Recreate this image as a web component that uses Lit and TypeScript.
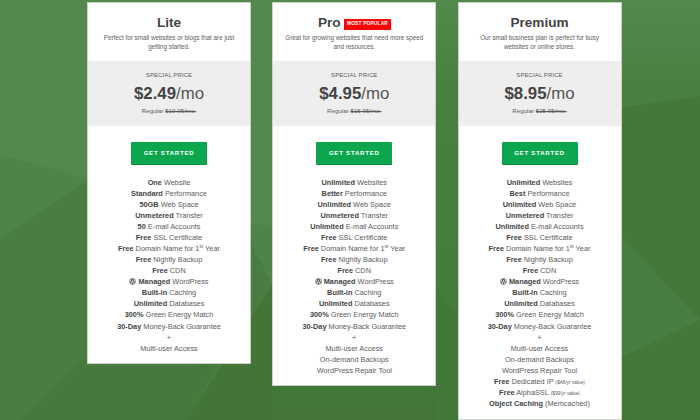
import { LitElement, html, css, svg } from "lit";
import { customElement } from "lit/decorators.js";

const wp = html`<svg class="wp" viewBox="0 0 20 20" aria-hidden="true"><circle cx="10" cy="10" r="9" fill="none" stroke="currentColor" stroke-width="1.6"/><path fill="currentColor" d="M3.2 10c0 2.700 1.600 5 3.900 6.100L3.800 7.200A6.800 6.800 0 0 0 3.200 10zM14.600 9.700c0-.9-.3-1.400-.6-1.900-.3-.5-.6-1-.6-1.500 0-.6.5-1.200 1.100-1.200h.1A6.800 6.800 0 0 0 4.300 6.300h.4c.7 0 1.800-.1 1.800-.1.400 0 .4.500 0 .6 0 0-.4 0-.8.100l2.400 7.300 1.500-4.400-1-2.900c-.4 0-.7-.1-.7-.1-.4 0-.3-.6 0-.6 0 0 1.100.1 1.800.1s1.800-.1 1.800-.1c.4 0 .4.500 0 .6 0 0-.4 0-.8.100l2.400 7.200.7-2.200c.3-1 .6-1.700.6-2.300zM10.100 10.600l-2 5.900a6.800 6.800 0 0 0 4.200-.1l-.1-.1zM16 6.700c0 .2.100.5.100.8 0 .7-.1 1.500-.5 2.400l-2.100 6a6.800 6.800 0 0 0 2.500-9.200z"/></svg>`;

interface Plan {
  name: string;
  badge?: string;
  desc: string;
  price: string;
  regular: string;
  rows: unknown[];
}

const row = (b: string, t: string) => html`<li><b>${b}</b> ${t}</li>`;
const tail = [
  row("Free", "SSL Certificate"),
  html`<li><b>Free</b> Domain Name for 1<sup>st</sup> Year</li>`,
  row("Free", "Nightly Backup"),
  row("Free", "CDN"),
  html`<li>${wp} <b>Managed</b> WordPress</li>`,
  row("Built-in", "Caching"),
  row("Unlimited", "Databases"),
  row("300%", "Green Energy Match"),
  row("30-Day", "Money-Back Guarantee"),
  html`<li>+</li>`,
  html`<li>Multi-user Access</li>`,
];
const proExtra = [html`<li>On-demand Backups</li>`, html`<li>WordPress Repair Tool</li>`];

const plans: Plan[] = [
  {
    name: "Lite",
    desc: "Perfect for small websites or blogs that are just getting started.",
    price: "$2.49",
    regular: "$10.95/mo.",
    rows: [
      row("One", "Website"),
      row("Standard", "Performance"),
      row("50GB", "Web Space"),
      row("Unmetered", "Transfer"),
      row("50", "E-mail Accounts"),
      ...tail,
    ],
  },
  {
    name: "Pro",
    badge: "MOST POPULAR",
    desc: "Great for growing websites that need more speed and resources.",
    price: "$4.95",
    regular: "$15.95/mo.",
    rows: [
      row("Unlimited", "Websites"),
      row("Better", "Performance"),
      row("Unlimited", "Web Space"),
      row("Unmetered", "Transfer"),
      row("Unlimited", "E-mail Accounts"),
      ...tail,
      ...proExtra,
    ],
  },
  {
    name: "Premium",
    desc: "Our small business plan is perfect for busy websites or online stores.",
    price: "$8.95",
    regular: "$25.95/mo.",
    rows: [
      row("Unlimited", "Websites"),
      row("Best", "Performance"),
      row("Unlimited", "Web Space"),
      row("Unmetered", "Transfer"),
      row("Unlimited", "E-mail Accounts"),
      ...tail,
      ...proExtra,
      html`<li><b>Free</b> Dedicated IP <small>($48/yr value)</small></li>`,
      html`<li><b>Free</b> AlphaSSL <small>($99/yr value)</small></li>`,
      html`<li><b>Object Caching</b> (Memcached)</li>`,
    ],
  },
];

@customElement("app-root")
export class AppRoot extends LitElement {
  static styles = css`
    :host {
      display: block;
      width: 700px;
      height: 420px;
      overflow: hidden;
      position: relative;
      background: #47813f;
      font-family: "Liberation Sans", Arial, sans-serif;
      color: #5c5c5c;
    }
    .bg {
      position: absolute;
      inset: 0;
      width: 100%;
      height: 100%;
    }
    .cols {
      position: relative;
      display: grid;
      grid-template-columns: repeat(3, 164px);
      column-gap: 21.25px;
      align-items: start;
      padding: 2px 0 0 87px;
    }
    .card {
      background: #fff;
      border: 1px solid #c9d4c6;
      text-align: center;
    }
    .head {
      box-sizing: border-box;
      height: 58px;
      padding: 10px 12px 0;
    }
    h2 {
      margin: 0;
      font-size: 13.6px;
      line-height: 20px;
      font-weight: 700;
      color: #444;
    }
    .badge {
      display: inline-block;
      vertical-align: 2px;
      padding: 0 2.500px;
      background: #f00;
      color: #fff;
      font-size: 4.800px;
      line-height: 10.500px;
      letter-spacing: 0.2px;
    }
    .desc {
      margin: -0.500px -2px 0;
      font-size: 6.300px;
      line-height: 9.300px;
      color: #5c5c5c;
    }
    .price {
      box-sizing: border-box;
      height: 65px;
      background: #eee;
      padding-top: 9.500px;
      color: #5c5c5c;
    }
    .special {
      font-size: 6px;
      line-height: 9px;
      letter-spacing: 0.1px;
    }
    .amount {
      margin-top: 3px;
      font-size: 16.800px;
      line-height: 21px;
      color: #444;
    }
    .amount b { font-weight: 700; }
    .amount span { font-weight: 400; color: #555; }
    .regular {
      margin-top: 2.500px;
      font-size: 6.200px;
      line-height: 9px;
    }
    .regular s { text-decoration-thickness: 1px; }
    .cta {
      display: block;
      box-sizing: border-box;
      width: 76px;
      height: 23px;
      margin: 16px auto 0;
      border: 0;
      border-bottom: 1px solid #0a8f44;
      border-radius: 1px;
      padding: 0;
      background: #0ca64f;
      color: #fff;
      font: 700 6px/21px "Liberation Sans", Arial, sans-serif;
      letter-spacing: 0.8px;
    }
    ul {
      list-style: none;
      margin: 0;
      padding: 11.500px 0 9.500px;
      font-size: 7.350px;
      line-height: 11.080px;
      color: #5c5c5c;
    }
    li { height: 11.080px; }
    li b { color: #444; font-weight: 700; }
    li small { font-size: 4.800px; line-height: 0; }
    sup { font-size: 5px; line-height: 0; vertical-align: 3px; }
    .wp {
      width: 7px;
      height: 7px;
      vertical-align: -1px;
      color: #444;
    }
  `;

  render() {
    return html`
      <svg class="bg" viewBox="0 0 700 420" preserveAspectRatio="none" aria-hidden="true">
        ${svg`<defs>
          <linearGradient id="fade" gradientUnits="userSpaceOnUse" x1="0" y1="0" x2="0" y2="420">
            <stop offset="0" stop-color="#528a4d"/>
            <stop offset="0.22" stop-color="#48803f"/>
            <stop offset="0.7" stop-color="#457c3c"/>
            <stop offset="1" stop-color="#427536"/>
          </linearGradient>
        </defs>
        <rect width="700" height="420" fill="#52894d"/>
        <polygon points="0,155 272,228 272,420 0,420" fill="#4d8546"/>
        <polygon points="0,240 88,180 250,240 272,285 187,420 0,420" fill="#497e41"/>
        <polygon points="88,355 20,420 187,420 218,365" fill="#467a3c"/>
        <polygon points="272,285 187,420 272,420" fill="#427536"/>
        <rect x="272" width="428" height="420" fill="url(#fade)"/>
        <polygon points="435,290 458,315 458,420 435,420" fill="#437838"/>
        <polygon points="620,108 700,96 700,420 620,420" fill="#437838"/>
        <polygon points="620,235 700,320 620,358" fill="#477e41"/>`}
      </svg>
      <div class="cols">
        ${plans.map(
          (p) => html`
            <section class="card">
              <div class="head">
                <h2>${p.name}${p.badge ? html` <span class="badge">${p.badge}</span>` : ""}</h2>
                <p class="desc">${p.desc}</p>
              </div>
              <div class="price">
                <div class="special">SPECIAL PRICE</div>
                <div class="amount"><b>${p.price}</b><span>/mo</span></div>
                <div class="regular">Regular <s>${p.regular}</s></div>
              </div>
              <button class="cta">GET STARTED</button>
              <ul>${p.rows}</ul>
            </section>
          `
        )}
      </div>
    `;
  }
}
